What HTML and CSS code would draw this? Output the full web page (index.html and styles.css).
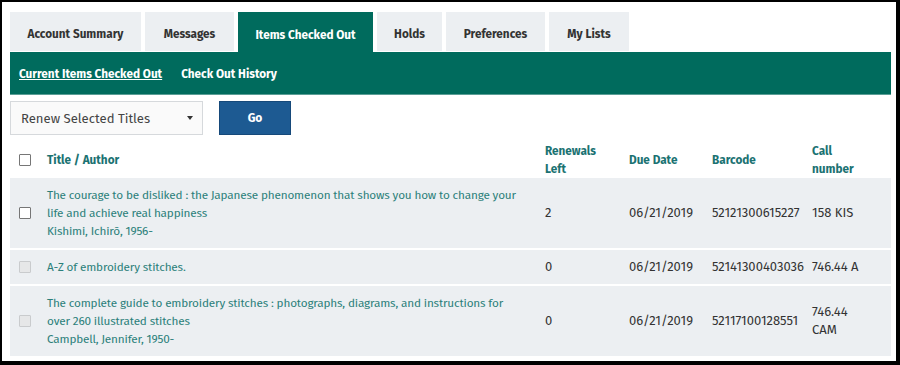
FILE: index.html
```
<!DOCTYPE html>
<html>
<head>
<meta charset="utf-8">
<link rel="stylesheet" href="styles.css">
</head>
<body>
<div class="frame">
  <nav class="tabs">
    <div class="tab">Account Summary</div>
    <div class="tab">Messages</div>
    <div class="tab active">Items Checked Out</div>
    <div class="tab">Holds</div>
    <div class="tab">Preferences</div>
    <div class="tab">My Lists</div>
  </nav>
  <div class="subnav">
    <a class="sublink current">Current Items Checked Out</a>
    <a class="sublink">Check Out History</a>
  </div>
  <div class="controls">
    <div class="select">
      <span>Renew Selected Titles</span>
      <span class="caret"></span>
    </div>
    <button class="go">Go</button>
  </div>
  <table class="items">
    <colgroup>
      <col class="c-check"><col class="c-title"><col class="c-ren"><col class="c-due"><col class="c-bar"><col class="c-call">
    </colgroup>
    <thead>
      <tr>
        <th><span class="cb"></span></th>
        <th>Title / Author</th>
        <th>Renewals<br>Left</th>
        <th>Due Date</th>
        <th>Barcode</th>
        <th>Call<br>number</th>
      </tr>
    </thead>
    <tbody>
      <tr>
        <td><span class="cb"></span></td>
        <td class="title">The courage to be disliked : the Japanese phenomenon that shows you how to change your life and achieve real happiness<br>Kishimi, Ichirō, 1956-</td>
        <td>2</td>
        <td>06/21/2019</td>
        <td>52121300615227</td>
        <td class="call">158 KIS</td>
      </tr>
      <tr class="sep"><td colspan="6"></td></tr>
      <tr>
        <td><span class="cb disabled"></span></td>
        <td class="title">A-Z of embroidery stitches.</td>
        <td>0</td>
        <td>06/21/2019</td>
        <td>52141300403036</td>
        <td class="call">746.44 A</td>
      </tr>
      <tr class="sep"><td colspan="6"></td></tr>
      <tr>
        <td><span class="cb disabled"></span></td>
        <td class="title">The complete guide to embroidery stitches : photographs, diagrams, and instructions for over 260 illustrated stitches<br>Campbell, Jennifer, 1950-</td>
        <td>0</td>
        <td>06/21/2019</td>
        <td>52117100128551</td>
        <td class="call">746.44 CAM</td>
      </tr>
    </tbody>
  </table>
</div>
</body>
</html>
```
FILE: styles.css
```
* { box-sizing: border-box; }
html, body { margin: 0; padding: 0; background: #fff; }
body {
  font-family: "Fira Sans", "Open Sans", "Liberation Sans", sans-serif;
  font-size: 11.75px;
  color: #333;
}
.frame {
  width: 900px;
  height: 365px;
  border-style: solid;
  border-color: #000;
  border-width: 2px 4px 4px 2px;
  padding: 10px 5px 7px 8px;
  background: #fff;
}
.tabs {
  display: flex;
  gap: 4px;
  height: 40px;
}
.tab {
  background: #eceff2;
  color: #333;
  font-weight: 700;
  font-size: 11.75px;
  height: 39px;
  display: flex;
  align-items: center;
  justify-content: center;
  padding-top: 5px;
}
.tab:nth-child(1) { width: 131px; }
.tab:nth-child(2) { width: 89px; }
.tab:nth-child(3) { width: 135px; }
.tab:nth-child(4) { width: 65px; }
.tab:nth-child(5) { width: 99px; }
.tab:nth-child(6) { width: 80px; }
.tab.active {
  background: #006b5d;
  color: #fff;
  height: 40px;
}
.subnav {
  background: #006b5d;
  height: 43px;
  display: flex;
  align-items: center;
  gap: 19px;
  padding-left: 9px;
  padding-top: 1px;
  border-bottom: 1px solid #5a9e96;
}
.sublink {
  color: #fff;
  font-weight: 700;
  font-size: 11.75px;
}
.sublink.current { text-decoration: underline; }
.controls {
  display: flex;
  gap: 16px;
  margin-top: 6px;
}
.select {
  width: 193px;
  height: 34px;
  border: 1px solid #d6d9dc;
  background: #fafafa;
  display: flex;
  align-items: center;
  justify-content: space-between;
  padding: 0 9px 0 10px;
  font-size: 13.1px;
  color: #444;
}
.caret {
  width: 0; height: 0;
  border-left: 3px solid transparent;
  border-right: 3px solid transparent;
  border-top: 4px solid #333;
}
.go {
  width: 72px;
  height: 34px;
  border: 1px solid #16497a;
  background: #1d5a92;
  color: #fff;
  font-family: inherit;
  font-weight: 700;
  font-size: 12px;
  padding: 0;
}
.items {
  width: 881px;
  border-collapse: collapse;
  table-layout: fixed;
}
.c-check { width: 29px; }
.c-title { width: 498px; }
.c-ren { width: 84px; }
.c-due { width: 83px; }
.c-bar { width: 100px; }
.c-call { width: 87px; }
.items th {
  text-align: left;
  color: #1b7272;
  font-weight: 700;
  font-size: 11.75px;
  line-height: 18px;
  padding: 7px 8px 0;
  vertical-align: middle;
}
.items th:first-child, .items td:first-child { padding-left: 9px; padding-right: 0; }
.items tbody tr { background: #eceff2; }
.items td {
  padding: 8px 8px;
  line-height: 18px;
  font-size: 13px;
  vertical-align: middle;
  color: #333;
}
.items td.title {
  color: #2b7f7a;
  font-size: 11.75px;
  letter-spacing: -0.17px;
  padding-right: 18px;
}
.items td.call { padding-right: 20px; }
.items tr.sep { background: #fff; }
.items tr.sep td { padding: 0; height: 2px; line-height: 0; font-size: 0; }
.cb {
  display: block;
  width: 12px;
  height: 12px;
  border: 1px solid #767676;
  background: #fff;
  border-radius: 1px;
}
.cb.disabled {
  border-color: #c9cbcd;
  background: #e6e7e8;
}
```
